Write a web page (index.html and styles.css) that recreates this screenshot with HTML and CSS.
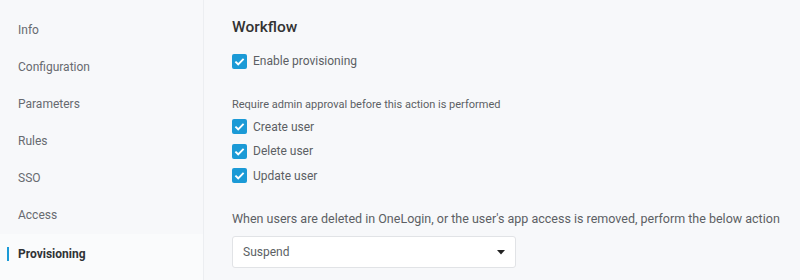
FILE: index.html
```html
<!DOCTYPE html>
<html lang="en">
<head>
    <meta charset="UTF-8">
    <title>App Provisioning</title>
    <link rel="stylesheet" href="styles.css">
</head>
<body>

<div class="sidebar">
    <div class="navItem">Info</div>
    <div class="navItem">Configuration</div>
    <div class="navItem">Parameters</div>
    <div class="navItem">Rules</div>
    <div class="navItem">SSO</div>
    <div class="navItem">Access</div>
    <div class="navItem active">Provisioning</div>
</div>

<div class="content">
    <h2>Workflow</h2>

    <label class="checkRow first">
        <span class="checkBox"><svg viewBox="0 0 15 15" width="15" height="15"><path d="M3.4 7.6 L6.2 10.3 L11.6 4.9" fill="none" stroke="#fff" stroke-width="1.9"/></svg></span>
        Enable provisioning
    </label>

    <p class="hint">Require admin approval before this action is performed</p>

    <label class="checkRow">
        <span class="checkBox"><svg viewBox="0 0 15 15" width="15" height="15"><path d="M3.4 7.6 L6.2 10.3 L11.6 4.9" fill="none" stroke="#fff" stroke-width="1.9"/></svg></span>
        Create user
    </label>
    <label class="checkRow">
        <span class="checkBox"><svg viewBox="0 0 15 15" width="15" height="15"><path d="M3.4 7.6 L6.2 10.3 L11.6 4.9" fill="none" stroke="#fff" stroke-width="1.9"/></svg></span>
        Delete user
    </label>
    <label class="checkRow">
        <span class="checkBox"><svg viewBox="0 0 15 15" width="15" height="15"><path d="M3.4 7.6 L6.2 10.3 L11.6 4.9" fill="none" stroke="#fff" stroke-width="1.9"/></svg></span>
        Update user
    </label>

    <p class="deleteNote">When users are deleted in OneLogin, or the user's app access is removed, perform the below action</p>

    <div class="selectBox">
        <span>Suspend</span>
        <svg viewBox="0 0 8 5" width="8" height="5"><path d="M0 0 H8 L4 4.5 Z" fill="#222"/></svg>
    </div>
</div>

</body>
</html>
```

FILE: styles.css
```css
body {
    font-family: Roboto, "Liberation Sans", sans-serif;
    background-color: #f7f8fa;
    margin: 0;
    height: 280px;
    overflow: hidden;
    display: flex;
}

/* left navigation */
.sidebar {
    width: 203px;
    border-right: 1px solid #eceef1;
    padding-top: 12px;
    flex-shrink: 0;
}

.navItem {
    position: relative;
    height: 37px;
    line-height: 37px;
    padding-left: 18px;
    font-size: 12px;
    color: #676a70;
}

.navItem.active {
    background-color: #fafbfc;
    color: #2f3236;
    font-weight: 700;
    height: 46px;
    line-height: 40px;
}

.navItem.active::before {
    content: "";
    position: absolute;
    left: 7px;
    top: 13px;
    width: 2px;
    height: 14px;
    background-color: #1b9ad6;
}

/* main form */
.content {
    padding: 18px 0 0 28px;
    color: #5c5f64;
    font-size: 12px;
    white-space: nowrap;
}

h2 {
    margin: 0 0 13px;
    font-size: 15.5px;
    font-weight: 500;
    color: #333;
}

.checkRow {
    display: flex;
    align-items: center;
    gap: 6px;
    height: 24.5px;
}

.checkRow.first {
    margin-bottom: 24px;
}

.checkBox {
    width: 15px;
    height: 15px;
    border-radius: 2px;
    background-color: #1b9ad6;
    display: flex;
}

.hint {
    font-size: 11px;
    margin: 0 0 4px;
}

.deleteNote {
    font-size: 12.5px;
    margin: 23px 0 10px;
}

.selectBox {
    width: 262px;
    height: 30px;
    background-color: #fff;
    border: 1px solid #e1e3e6;
    border-radius: 3px;
    display: flex;
    align-items: center;
    justify-content: space-between;
    padding: 0 10px;
}
```
